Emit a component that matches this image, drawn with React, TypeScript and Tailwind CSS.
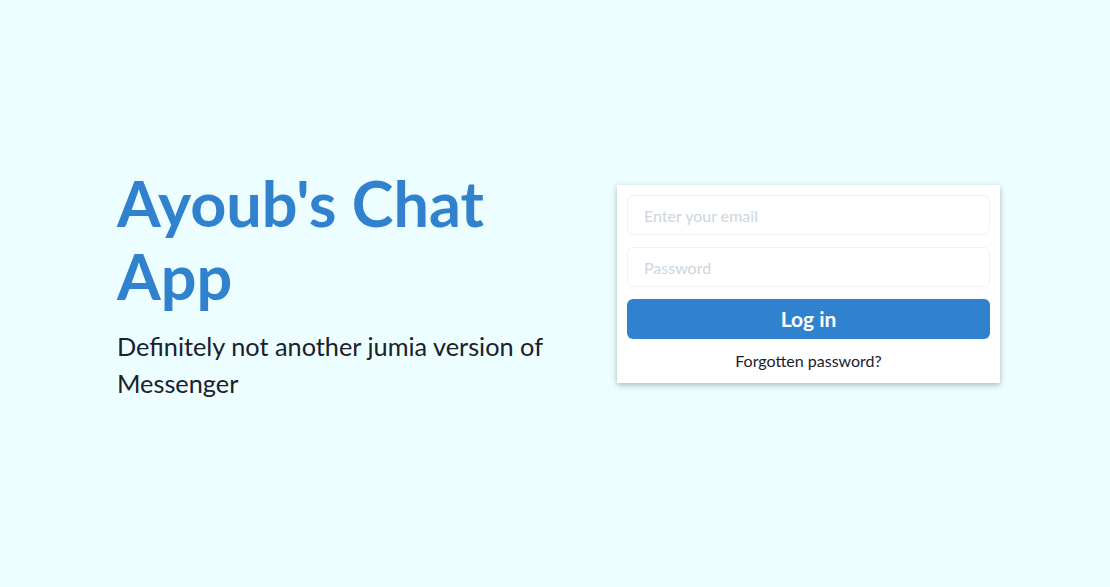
import React from "react";

const App = () => {
  return (
    <div
      className="min-h-screen h-[587px] w-full bg-[#ecfeff] flex items-center pl-[117px] pb-[19px]"
      style={{ fontFamily: "Lato, 'Noto Sans', sans-serif" }}
    >
      <div className="w-[460px] shrink-0">
        <h1 className="text-[63px] leading-[73px] font-bold text-[#3182ce]">Ayoub's Chat App</h1>
        <p className="mt-[16px] text-[25.3px] leading-[37px] text-[#1a202c]">
          Definitely not another jumia version of Messenger
        </p>
      </div>

      <div className="ml-[40px] w-[383px] shrink-0 bg-white p-[10px] shadow-[0_2px_6px_rgba(0,0,0,0.28)]">
        <form className="flex flex-col gap-3" onSubmit={(e) => e.preventDefault()}>
          <input
            type="email"
            placeholder="Enter your email"
            className="h-10 w-full rounded-md border border-[#edf2f7] px-4 text-[16px] text-[#1a202c] placeholder:text-[#cbd5e0] outline-none"
          />
          <input
            type="password"
            placeholder="Password"
            className="h-10 w-full rounded-md border border-[#edf2f7] px-4 text-[16px] text-[#1a202c] placeholder:text-[#cbd5e0] outline-none"
          />
          <button
            type="submit"
            className="h-10 w-full rounded-md bg-[#3182ce] text-[21px] font-bold text-white"
          >
            Log in
          </button>
        </form>
        <p className="mt-[10px] text-center text-[16px] leading-6 text-[#1a202c]">Forgotten password?</p>
      </div>
    </div>
  );
};

export default App;
